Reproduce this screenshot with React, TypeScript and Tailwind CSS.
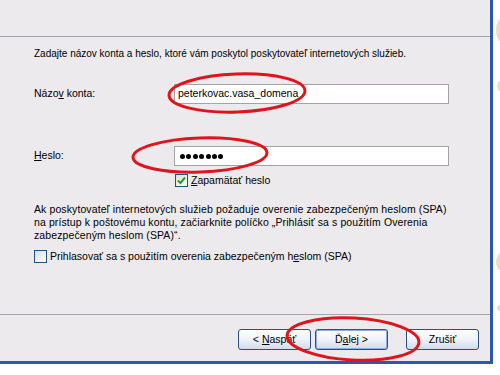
import React from "react"

function Check({ checked }: { checked?: boolean }) {
  return (
    <span className="flex h-[13px] w-[13px] shrink-0 items-center justify-center border border-[#1C5180] bg-gradient-to-br from-[#DCDCD7] to-white">
      {checked ? (
        <svg width="9" height="9" viewBox="0 0 9 9">
          <path d="M1 4.5 L3.5 7 L8 1.5" fill="none" stroke="#21A121" strokeWidth="2" />
        </svg>
      ) : null}
    </span>
  )
}

function XpButton({ children, primary }: { children: React.ReactNode; primary?: boolean }) {
  return (
    <button
      className={
        "flex h-[21px] w-[73px] items-center justify-center rounded-[3px] border border-[#2D4E8C] bg-gradient-to-b from-white via-[#F0F2F8] to-[#D3DBEB] text-[10.5px] text-black " +
        (primary ? "shadow-[inset_0_0_0_1px_#8DAEE0]" : "")
      }
    >
      <span className="whitespace-pre">{children}</span>
    </button>
  )
}

export default function App() {
  return (
    <div className="relative flex h-[375px] w-[500px] items-start overflow-hidden bg-white font-['Liberation_Sans',Arial,sans-serif] text-[10.5px] text-black">
      <div className="flex h-[364px] w-[493px] shrink-0 flex-col border-r-[3px] border-b-[3px] border-[#2A56B4] bg-[#ECEAEC]">
        <div className="h-[37px] shrink-0 border-b border-[#A6A5AA]" />

        <div className="flex flex-1 flex-col pt-[10px] pl-[34px]">
          <p className="text-[10px] leading-[13px]">
            Zadajte názov konta a heslo, ktoré vám poskytol poskytovateľ internetových služieb.
          </p>

          <div className="mt-[24px] flex h-[20px] items-center">
            <span className="w-[140px]">
              Názo<span className="underline">v</span> konta:
            </span>
            <div className="flex h-[20px] w-[275px] items-center border border-[#A3A3A3] bg-white pl-[3px]">
              peterkovac.vasa_domena
            </div>
          </div>

          <div className="mt-[42px] flex h-[20px] items-center">
            <span className="w-[140px]">
              <span className="underline">H</span>eslo:
            </span>
            <div className="flex h-[20px] w-[275px] items-center gap-[1.4px] border border-[#A3A3A3] bg-white pl-[5px]">
              {[0, 1, 2, 3, 4, 5, 6].map((i) => (
                <span key={i} className="h-[5px] w-[5px] rounded-full bg-black" />
              ))}
            </div>
          </div>

          <label className="mt-[7px] ml-[141px] flex items-center gap-[3px]">
            <Check checked />
            <span>
              <span className="underline">Z</span>apamätať heslo
            </span>
          </label>

          <p className="mt-[14px] leading-[13px] tracking-[0.1px]">
            Ak poskytovateľ internetových služieb požaduje overenie zabezpečeným heslom (SPA)
            <br />
            na prístup k poštovému kontu, začiarknite políčko „Prihlásiť sa s použitím Overenia
            <br />
            zabezpečeným heslom (SPA)“.
          </p>

          <label className="mt-[7px] flex items-center gap-[3px]">
            <Check />
            <span>
              Prihlasovať sa s použitím overenia zabezpečeným h<span className="underline">e</span>slom (SPA)
            </span>
          </label>
        </div>

        <div className="flex h-[47px] shrink-0 justify-end gap-[4px] border-t border-[#A6A5AA] pt-[14px] pr-[11px]">
          <XpButton>
            {"< "}
            <span className="underline">N</span>aspäť
          </XpButton>
          <XpButton primary>
            Ď<span className="underline">a</span>
            {"lej >"}
          </XpButton>
          <span className="w-[10px]" />
          <XpButton>Zrušiť</XpButton>
        </div>
      </div>

      <svg width="7" height="375" className="shrink-0">
        <g fill="#D4B77A" opacity="0.45">
          <ellipse cx="9" cy="30" rx="6" ry="12" />
          <ellipse cx="9" cy="86" rx="5" ry="6" />
          <ellipse cx="9" cy="262" rx="6" ry="9" />
          <ellipse cx="8" cy="308" rx="4" ry="3" />
        </g>
      </svg>

      <svg className="pointer-events-none absolute inset-0" width="500" height="375">
        <g fill="none" stroke="#E0141C" strokeWidth="3">
          <ellipse cx="237" cy="93" rx="68" ry="19" transform="rotate(-2 237 93)" />
          <ellipse cx="200" cy="155" rx="67" ry="17" transform="rotate(-2 200 155)" />
          <ellipse cx="353" cy="339" rx="66" ry="21" transform="rotate(3 353 339)" />
        </g>
      </svg>
    </div>
  )
}
